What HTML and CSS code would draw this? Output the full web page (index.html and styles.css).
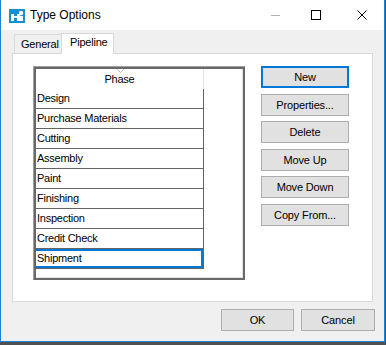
FILE: index.html
```html
<!DOCTYPE html>
<html lang="en">
<head>
  <meta charset="UTF-8" />
  <title>Type Options</title>
  <link rel="stylesheet" href="styles.css">
</head>
<body>
  <div class="window">
    <div class="titlebar">
      <svg class="app-icon" width="16" height="14" viewBox="0 0 16 14">
        <rect width="16" height="14" fill="#1a8cd0"/>
        <rect x="2" y="5" width="3" height="7" fill="#fff"/>
        <rect x="5" y="7" width="4" height="2" fill="#fff"/>
        <rect x="8" y="5" width="3" height="7" fill="#fff"/>
        <circle cx="12" cy="4" r="2.2" fill="#fff"/>
        <rect x="11" y="7" width="3" height="5" fill="#fff"/>
      </svg>
      <span class="title">Type Options</span>
      <div class="caption">
        <span class="cap-min"></span>
        <span class="cap-max"></span>
        <svg class="cap-close" width="10" height="10" viewBox="0 0 10 10">
          <path d="M0.5 0.5 L9.5 9.5 M9.5 0.5 L0.5 9.5" stroke="#000" stroke-width="1" fill="none"/>
        </svg>
      </div>
    </div>

    <div class="client">
      <div class="tabs">
        <div class="tab">General</div>
        <div class="tab active">Pipeline</div>
      </div>

      <div class="panel">
        <div class="listbox">
          <div class="column">
            <div class="col-head">
              <svg class="sort" width="7" height="4" viewBox="0 0 7 4">
                <path d="M0.5 0.5 L3.5 3.5 L6.5 0.5" stroke="#b4b4b4" fill="none"/>
              </svg>
              Phase
            </div>
            <div class="row">Design</div>
            <div class="row">Purchase Materials</div>
            <div class="row">Cutting</div>
            <div class="row">Assembly</div>
            <div class="row">Paint</div>
            <div class="row">Finishing</div>
            <div class="row">Inspection</div>
            <div class="row">Credit Check</div>
            <div class="row sel">Shipment</div>
          </div>
        </div>

        <div class="actions">
          <button class="btn default">New</button>
          <button class="btn">Properties...</button>
          <button class="btn">Delete</button>
          <button class="btn">Move Up</button>
          <button class="btn">Move Down</button>
          <button class="btn">Copy From...</button>
        </div>
      </div>

      <div class="footer">
        <button class="btn ok">OK</button>
        <button class="btn cancel">Cancel</button>
      </div>
    </div>
  </div>
</body>
</html>
```

FILE: styles.css
```css
html {
  background-color: #505050;
}

body {
  margin: 0;
  font-family: 'Liberation Sans', Arial, sans-serif;
  font-size: 11px;
  color: #000;
}

.window {
  width: 385px;
  height: 342px;
  box-sizing: border-box;
  border: 1px solid #1883d7;
  border-top: none;
  background-color: #f0f0f0;
  display: flex;
  flex-direction: column;
}

.titlebar {
  height: 30px;
  background-color: #fff;
  display: flex;
  align-items: center;
  flex-shrink: 0;
}

.app-icon {
  margin-left: 8px;
  margin-top: 1px;
}

.title {
  margin-left: 5px;
  font-size: 12px;
  margin-top: -1px;
}

.caption {
  margin-left: auto;
  display: flex;
  align-items: center;
  padding-right: 17px;
}

.cap-min {
  width: 9px;
  height: 1px;
  background-color: #b0b0b0;
  margin-right: 31px;
}

.cap-max {
  width: 8px;
  height: 8px;
  border: 1px solid #000;
  margin-right: 36px;
}

.client {
  flex: 1;
  padding: 3px 10px 0 11px;
}

.tabs {
  display: flex;
  align-items: flex-end;
  padding-left: 2px;
  height: 20px;
}

.tab {
  box-sizing: border-box;
  width: 48px;
  height: 19px;
  border: 1px solid #d9d9d9;
  border-bottom: none;
  background-color: #f0f0f0;
  padding: 3px 0 0 6px;
  letter-spacing: -0.2px;
}

.tab.active {
  position: relative;
  z-index: 1;
  width: 53px;
  height: 21px;
  margin-left: -1px;
  margin-bottom: -1px;
  background-color: #fff;
  padding: 2px 0 0 8px;
}

.panel {
  box-sizing: border-box;
  width: 361px;
  height: 249px;
  border: 1px solid #d9d9d9;
  background-color: #fff;
  display: flex;
  align-items: flex-start;
  padding: 12px 0 0 20px;
}

.listbox {
  box-sizing: border-box;
  width: 212px;
  height: 214px;
  border: 1px solid;
  border-color: #a0a0a0 #696969 #696969 #a0a0a0;
  box-shadow: inset 2px 2px 0 #696969, inset -1px -1px 0 #696969, inset -2px -2px 0 #e3e3e3;
  padding: 2px 0 0 2px;
}

.column {
  width: 168px;
  letter-spacing: -0.25px;
}

.col-head {
  position: relative;
  height: 20px;
  line-height: 20px;
  text-align: center;
  box-sizing: border-box;
  border-right: 1px solid #e5e5e5;
}

.sort {
  position: absolute;
  top: 0;
  left: 81px;
}

.row {
  box-sizing: border-box;
  height: 20px;
  line-height: 19px;
  padding-left: 1px;
  border-right: 1px solid #646464;
  border-bottom: 1px solid #646464;
  white-space: nowrap;
}

.row.sel {
  box-shadow: inset 0 2px 0 #0078d7, inset 0 -2px 0 #0078d7, inset -2px 0 0 #0078d7, inset 1px 0 0 #0078d7;
  margin-left: -1px;
  padding-left: 2px;
}

.actions {
  margin-left: 16px;
  display: flex;
  flex-direction: column;
  gap: 5.6px;
}

.btn {
  box-sizing: border-box;
  width: 88px;
  height: 22px;
  background-color: #e1e1e1;
  border: 1px solid #adadad;
  font-family: 'Liberation Sans', Arial, sans-serif;
  font-size: 11px;
  letter-spacing: -0.15px;
  color: #000;
  padding: 0;
}

.btn.default {
  border: 2px solid #0078d7;
}

.footer {
  display: flex;
  justify-content: flex-end;
  gap: 7px;
  margin-top: 7px;
  margin-right: -1px;
}

.btn.ok {
  width: 73px;
}

.btn.cancel {
  width: 74px;
}
```
